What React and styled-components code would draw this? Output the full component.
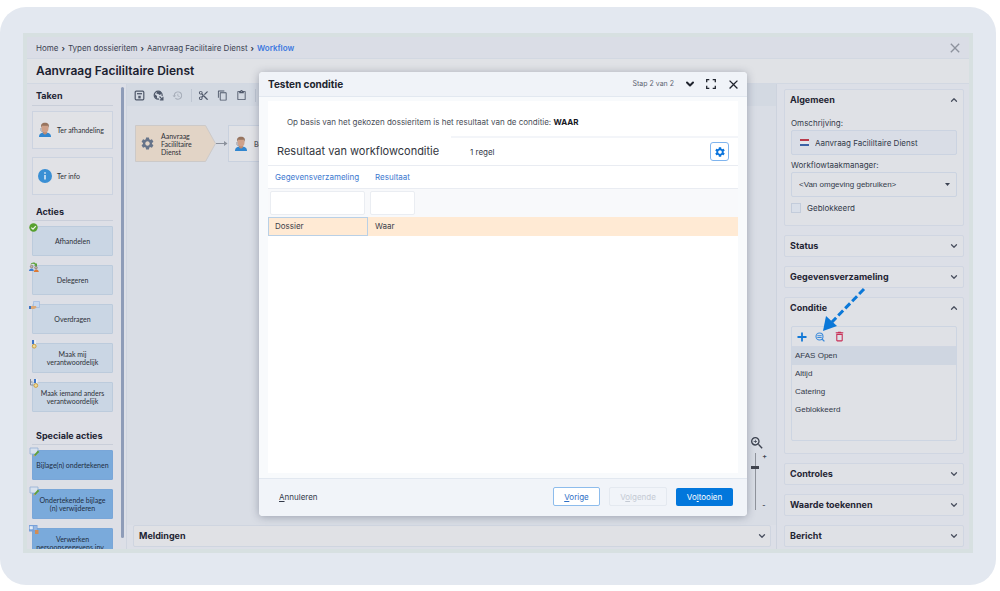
import React from "react";
import styled, { createGlobalStyle, css } from "styled-components";
import {
  MdClose,
  MdContentCopy,
  MdContentCut,
  MdContentPaste,
  MdDeleteOutline,
  MdHistory,
  MdOutlineZoomIn,
  MdSettings,
} from "react-icons/md";
import { FiChevronDown, FiChevronUp } from "react-icons/fi";

const GlobalStyle = createGlobalStyle`
  * {
    box-sizing: border-box;
  }
  body {
    margin: 0;
    background: #ffffff;
    font-family: Inter, sans-serif;
    font-size: 8px;
    line-height: 10px;
    color: #333a4a;
  }
  button, input, select {
    font: inherit;
    color: inherit;
    margin: 0;
    padding: 0;
  }
  button {
    background: none;
    border: 0;
    cursor: pointer;
  }
  svg {
    display: block;
    flex: none;
  }
`;

const Page = styled.div`
  display: flex;
  height: 100vh;
  padding: 7px 4px 6px 0;
`;

const Frame = styled.div`
  display: flex;
  flex: 1;
  padding: 26px 23px 32px;
  border-radius: 26px;
  background: #e3e8f0;
`;

const Window = styled.div`
  position: relative;
  display: flex;
  flex-direction: column;
  flex: 1;
  min-width: 0;
  border: 4px solid #d7e0e1;
  background: #dcdfe7;
`;

const Breadcrumb = styled.nav`
  display: flex;
  align-items: center;
  gap: 3px;
  height: 22px;
  flex: none;
  padding: 0 6px 0 9px;
  background: #dadde6;
  border-bottom: 1px solid #d2d8e2;
`;

const Crumb = styled.a`
  color: ${(props) => (props.$active ? "#3d79e0" : "#3c4353")};
  font-weight: ${(props) => (props.$active ? 600 : 400)};
  text-decoration: none;
`;

const Separator = styled.span`
  font-weight: 700;
`;

const CloseWindow = styled.button`
  margin-left: auto;
  color: #8d929d;
`;

const TitleBar = styled.header`
  display: flex;
  align-items: center;
  flex: none;
  height: 25px;
  padding: 0 9px;
  background: #e0e2e6;
  border-bottom: 1px solid #d2d8e2;
`;

const PageTitle = styled.h1`
  margin: 0;
  font-size: 12px;
  line-height: 14px;
  font-weight: 600;
  color: #1b2130;
`;

const Body = styled.div`
  display: flex;
  flex: 1;
  min-height: 0;
`;

const Sidebar = styled.aside`
  width: 94px;
  flex: none;
  overflow: hidden;
  padding: 0 8px 0 5px;
  background: #dddfe6;
`;

const ScrollThumb = styled.div`
  width: 3px;
  flex: none;
  margin: 3px 2px 11px 0;
  border-radius: 2px;
  background: #8e9cb8;
`;

const SectionTitle = styled.h2`
  display: flex;
  align-items: center;
  height: ${(props) => (props.$first ? 22 : 18)}px;
  margin: ${(props) => props.$gap || 0}px 0 5px;
  padding-top: ${(props) => (props.$first ? 3 : 0)}px;
  padding-left: 4px;
  border-bottom: 1px solid #c9ced9;
  font-size: 9px;
  line-height: 12px;
  font-weight: 700;
  color: #1f2534;
`;

const TaskCard = styled.button`
  display: flex;
  align-items: center;
  gap: 5px;
  width: 100%;
  height: 38px;
  margin-bottom: 8px;
  padding: 0 5px;
  border: 1px solid #ccd3e0;
  background: #e1e2e6;
  font-family: Lato, sans-serif;
  font-size: 7px;
  color: #2d3038;
  white-space: nowrap;
`;

const ActionCard = styled.button`
  position: relative;
  display: block;
  width: 100%;
  height: 30px;
  margin-bottom: 9px;
  border: 1px solid ${(props) => (props.$special ? "#79a6d8" : "#bccbdc")};
  border-radius: 1px;
  background: ${(props) => (props.$special ? "#7aaadb" : "#cad6e4")};
  font-family: Lato, sans-serif;
  font-size: 7px;
  line-height: 8px;
  color: ${(props) => (props.$special ? "#1d2d42" : "#2d3038")};
  white-space: pre-line;
`;

const Badge = styled.span`
  position: absolute;
  top: -4px;
  left: -4px;
`;

const Main = styled.main`
  display: flex;
  flex-direction: column;
  flex: 1;
  min-width: 0;
  border-left: 1px solid #cfd5e0;
  border-right: 1px solid #cdd3de;
`;

const Toolbar = styled.div`
  display: flex;
  align-items: center;
  height: 22px;
  flex: none;
  padding-left: 7px;
  background: #d3d9e2;
  color: #4f586a;
`;

const ToolButton = styled.button`
  display: flex;
  align-items: center;
  margin-right: 8px;
  opacity: ${(props) => (props.disabled ? 0.35 : 1)};
`;

const Divider = styled.span`
  width: 1px;
  height: 13px;
  margin-right: 6px;
  background: #bfc6d2;
`;

const Canvas = styled.div`
  position: relative;
  flex: 1;
  background: #d9dde5;
`;

const StartNode = styled.div`
  position: absolute;
  left: 8px;
  top: 19px;
  width: 81px;
  height: 37px;
`;

const StartShape = styled.svg`
  position: absolute;
  inset: 0;
`;

const NodeContent = styled.div`
  position: relative;
  display: flex;
  align-items: center;
  gap: 6px;
  height: 100%;
  padding-left: 5px;
  font-family: Lato, sans-serif;
  font-size: 7px;
  line-height: 8px;
  white-space: pre-line;
  color: #2d3038;
`;

const Connector = styled.svg`
  position: absolute;
  left: 89px;
  top: 33px;
`;

const TaskNode = styled.div`
  position: absolute;
  left: 101px;
  top: 19px;
  width: 81px;
  height: 37px;
  border: 1px solid #c9d1de;
  background: #e1e2e6;
`;

const ZoomControl = styled.div`
  position: absolute;
  right: 9px;
  bottom: 15px;
  width: 18px;
  color: #3d4350;
`;

const ZoomTrack = styled.div`
  display: flex;
  justify-content: space-between;
  height: 57px;
  margin-top: 2px;
  padding-left: 2px;
`;

const ZoomSlider = styled.input`
  appearance: none;
  writing-mode: vertical-lr;
  direction: rtl;
  width: 8px;
  height: 57px;
  background: linear-gradient(#8f939b, #8f939b) center / 1px 100% no-repeat;

  &::-webkit-slider-thumb {
    appearance: none;
    width: 8px;
    height: 3px;
    background: #41454f;
  }
`;

const ZoomSigns = styled.div`
  display: flex;
  flex-direction: column;
  justify-content: space-between;
  font-size: 7px;
  font-weight: 600;
  line-height: 8px;
`;

const Messages = styled.section`
  display: flex;
  align-items: center;
  justify-content: space-between;
  height: 22px;
  flex: none;
  margin: 0 5px 2px 6px;
  padding: 0 3px 0 5px;
  border: 1px solid #cfd5e0;
  border-radius: 2px;
  background: #e0e1e5;
`;

const PanelTitle = styled.h2`
  margin: 0;
  font-size: 9px;
  line-height: 12px;
  font-weight: 700;
  color: #1f2534;
`;

const PanelToggle = styled.button`
  color: #4a5060;
`;

const Properties = styled.aside`
  display: flex;
  flex-direction: column;
  gap: 9px;
  width: 192px;
  flex: none;
  padding: 5px 5px 0 7px;
  overflow: hidden;
`;

const Panel = styled.section`
  flex: none;
  border: 1px solid #d0d6e2;
  border-radius: 2px;
  background: #dfe1e6;
`;

const PanelHeader = styled.div`
  display: flex;
  align-items: center;
  justify-content: space-between;
  height: 20px;
  padding: 0 4px 0 5px;
`;

const PanelBody = styled.div`
  display: flex;
  flex-direction: column;
  padding: 8px 6px 12px;
`;

const FieldLabel = styled.label`
  margin: ${(props) => (props.$spaced ? "5px 0 2px" : "0 0 2px")};
`;

const fieldBox = css`
  height: 25px;
  border: 1px solid #cbd3e1;
  border-radius: 2px;
`;

const Description = styled.div`
  ${fieldBox}
  display: flex;
  align-items: center;
  gap: 6px;
  padding-left: 8px;
  background: #d9dde6;
`;

const DescriptionInput = styled.input`
  flex: 1;
  min-width: 0;
  border: 0;
  outline: 0;
  background: transparent;
`;

const SelectWrap = styled.div`
  position: relative;
`;

const Select = styled.select`
  ${fieldBox}
  appearance: none;
  width: 100%;
  padding: 0 7px;
  background: #dfe1e6;
  font-family: "Liberation Sans", sans-serif;
`;

const Caret = styled.svg`
  position: absolute;
  right: 7px;
  top: 11px;
  pointer-events: none;
`;

const CheckLabel = styled.label`
  display: flex;
  align-items: center;
  gap: 6px;
  margin-top: 6px;
`;

const Checkbox = styled.input`
  appearance: none;
  width: 10px;
  height: 10px;
  border: 1px solid #c3ccdb;
  background: #d9dfe9;
`;

const ListBox = styled.div`
  height: 115px;
  border: 1px solid #cdd5e2;
  border-radius: 2px;
`;

const ListTools = styled.div`
  display: flex;
  align-items: center;
  gap: 8px;
  height: 20px;
  padding-left: 5px;
  border-bottom: 1px solid #d0d6e2;
`;

const ListItem = styled.button`
  display: block;
  width: 100%;
  height: 18px;
  padding-left: 3px;
  background: ${(props) => (props.$selected ? "#cfd6e1" : "transparent")};
  font-family: "Liberation Sans", sans-serif;
  text-align: left;
`;

const Pointer = styled.svg`
  position: absolute;
  right: 99px;
  top: 250px;
`;

const Overlay = styled.div`
  position: absolute;
  inset: 0;
  display: flex;
  padding: 35px 222px 33px 232px;
  pointer-events: none;
`;

const Dialog = styled.div`
  display: flex;
  flex-direction: column;
  flex: 1;
  min-width: 0;
  border-radius: 4px;
  background: #f8fafc;
  box-shadow: 0 1px 8px rgba(40, 50, 75, 0.35);
  pointer-events: auto;
  overflow: hidden;
`;

const DialogHeader = styled.div`
  display: flex;
  align-items: center;
  height: 25px;
  flex: none;
  padding: 0 6px 0 9px;
  border-bottom: 1px solid #e2e8f0;
  background: #f0f3f8;
  color: #20242e;
`;

const DialogTitle = styled.h2`
  flex: 1;
  margin: 0;
  font-size: 10px;
  line-height: 12px;
  font-weight: 700;
`;

const Step = styled.span`
  font-size: 7px;
  color: #5d6370;
`;

const HeaderButton = styled.button`
  margin-left: 10px;
`;

const DialogBody = styled.div`
  display: flex;
  flex-direction: column;
  flex: 1;
  margin: 4px 9px 5px;
  background: #ffffff;
`;

const Message = styled.p`
  margin: 0;
  padding: 16px 19px 9px;
  color: #4a4e58;

  b {
    color: #15181f;
    font-weight: 700;
  }
`;

const ResultBar = styled.div`
  display: flex;
  height: 29px;
`;

const ResultTitle = styled.h3`
  width: 183px;
  margin: 0;
  padding-left: 9px;
  font-size: 11px;
  line-height: 30px;
  font-weight: 400;
  color: #33363e;
  white-space: nowrap;
`;

const ResultInfo = styled.div`
  display: flex;
  flex: 1;
  align-items: center;
  justify-content: space-between;
  padding: 0 9px 0 19px;
  border-top: 2px solid #f3f5f9;
`;

const SettingsButton = styled.button`
  display: flex;
  align-items: center;
  justify-content: center;
  width: 19px;
  height: 19px;
  border: 1px solid #7fb4ee;
  border-radius: 3px;
  color: #0a74dc;
`;

const Table = styled.table`
  width: 100%;
  border-collapse: collapse;
  table-layout: fixed;
  color: #3c404a;

  th,
  td {
    padding: 0 6px 0 7px;
    text-align: left;
    font-weight: 400;
  }
  th {
    height: 23px;
    border-top: 1px solid #e9ecf2;
    border-bottom: 1px solid #e9ecf2;
    color: #3c78cf;
  }
`;

const Column = styled.col`
  width: ${(props) => props.$width || "auto"};
`;

const FilterRow = styled.tr`
  background: #f8f9fb;

  td {
    height: 28px;
    padding: 0 3px 0 2px;
  }
`;

const FilterInput = styled.input`
  display: block;
  width: 100%;
  height: 24px;
  border: 1px solid #eaedf2;
  border-radius: 2px;
  background: #ffffff;
`;

const ResultRow = styled.tr`
  background: #ffead4;

  td {
    height: 19px;
  }
  td:first-child {
    outline: 1px solid #b9d0e6;
    outline-offset: -1px;
  }
`;

const DialogFooter = styled.div`
  display: flex;
  align-items: center;
  gap: 9px;
  height: 38px;
  flex: none;
  padding: 0 14px 2px 20px;
  border-top: 1px solid #e2e8f0;
  background: #f1f4f9;
`;

const CancelButton = styled.button`
  margin-right: auto;
`;

const FooterButton = styled.button`
  width: ${(props) => (props.$wide ? 58 : 47)}px;
  height: 19px;
  border: 1px solid #8dbcec;
  border-radius: 2px;
  background: #ffffff;
  color: #2f6fc6;

  &:disabled {
    border-color: #e4e9f0;
    background: transparent;
    color: #c4cad4;
  }
`;

const PrimaryButton = styled(FooterButton)`
  width: 57px;
  height: 18px;
  border: 0;
  background: #0277dc;
  color: #ffffff;
`;

const PersonIcon = () => (
  <svg width="14" height="16" viewBox="0 0 14 16">
    <path d="M1 15c0-3.400 2.400-4.500 6-4.500s6 1.100 6 4.500z" fill="#3186cf" />
    <path d="M5 9h4v2.500L7 12.800l-2-1.300z" fill="#bd8a70" />
    <ellipse cx="7" cy="6.200" rx="3.500" ry="4.300" fill="#cfa18a" />
    <path d="M3.200 6C2.400 2.500 4 .8 7 .8s4.600 1.700 3.800 5.200L10 3.800H4z" fill="#97745f" />
    <path d="M2.900 6v2.800l2.600 1.700" stroke="#7d8494" strokeWidth=".7" fill="none" />
  </svg>
);

const InfoIcon = () => (
  <svg width="14" height="14" viewBox="0 0 14 14">
    <circle cx="7" cy="7" r="7" fill="#3a8fd4" />
    <path d="M7 3.300v1.500M7 6v4.500" stroke="#e6eef6" strokeWidth="1.500" />
  </svg>
);

const SaveIcon = () => (
  <svg width="11" height="11" viewBox="0 0 11 11" fill="none" stroke="currentColor">
    <rect x="1.200" y="1.200" width="8.600" height="8.600" rx="1" strokeWidth="1.200" />
    <path d="M3 3.700h5" strokeWidth="1.300" />
    <path d="M5.500 5.800v2.600" strokeWidth="2.400" />
  </svg>
);

const GlobeIcon = () => (
  <svg width="11" height="11" viewBox="0 0 11 11">
    <circle cx="5.200" cy="5.200" r="4" fill="none" stroke="currentColor" strokeWidth="1.200" />
    <path d="M1.500 4 4 6v2.500L2 7zM4 1.500h3.500L8.500 4 6.500 5 5 3.800 3.500 4z" fill="currentColor" />
    <path d="M6 6h5v5H6z" fill="#d3d9e2" />
    <path d="m6.500 6.500 3.300 3.300M9.900 6.800v3.100H6.800" fill="none" stroke="currentColor" strokeWidth="1.200" />
  </svg>
);

const FlagIcon = () => (
  <svg width="9" height="7" viewBox="0 0 9 7">
    <path d="M0 0h9v2H0z" fill="#b93a4b" />
    <path d="M0 2h9v3H0z" fill="#e4e6ec" />
    <path d="M0 5h9v2H0z" fill="#3c62a6" />
  </svg>
);

const ExpandIcon = () => (
  <svg width="10" height="10" viewBox="0 0 10 10" fill="none" stroke="currentColor" strokeWidth="1.300">
    <path d="M.7 3.300V.7h2.600M6.700.7h2.600v2.600M9.300 6.700v2.600H6.700M3.300 9.300H.7V6.700" />
  </svg>
);

const PlusIcon = () => (
  <svg width="10" height="10" viewBox="0 0 10 10">
    <path d="M5 .5v9M.5 5h9" stroke="#1379d6" strokeWidth="1.800" />
  </svg>
);

const TestIcon = () => (
  <svg width="10" height="10" viewBox="0 0 10 10" fill="none" stroke="#3b8ada">
    <circle cx="4.500" cy="4.500" r="3.500" strokeWidth="1.100" />
    <path d="M2.300 3.700h4.400M2.300 5.500h4.400" strokeWidth="1" />
    <path d="m7 7 2.400 2.400" strokeWidth="1.300" />
  </svg>
);

const badgeIcons = {
  check: (
    <svg width="9" height="9" viewBox="0 0 9 9">
      <circle cx="4.500" cy="4.500" r="4.200" fill="#57a02f" />
      <path d="M2.300 4.600 4 6.200l2.800-3" fill="none" stroke="#f0f5ee" strokeWidth="1.200" />
    </svg>
  ),
  people: (
    <svg width="10" height="10" viewBox="0 0 10 10">
      <path d="M1.500 2.800C2 .5 5.500-.3 7 1.800l1-.6v3.300L5 3.300l1-.6C5 1.500 3 1.500 1.500 2.800z" fill="#5ba23b" />
      <circle cx="2.600" cy="4.600" r="1.300" fill="#c9b8ac" stroke="#66584e" strokeWidth=".5" />
      <circle cx="7" cy="5.700" r="1.300" fill="#c9b8ac" stroke="#66584e" strokeWidth=".5" />
      <path d="M0 9c0-3.400 4.800-3.400 4.800 0z" fill="#3f7fd0" />
      <path d="M4.800 10c0-3.400 5-3.400 5 0z" fill="#dc7a35" />
    </svg>
  ),
  hand: (
    <svg width="11" height="9" viewBox="0 0 11 9">
      <path d="M4.500.500h6v6h-6z" fill="#c6d7ee" stroke="#9db9df" strokeWidth=".7" />
      <path d="M2 5h5l.5 1.800L5 8H2z" fill="#dba877" />
      <path d="M0 5h2v3H0z" fill="#3c75c0" />
    </svg>
  ),
  medal: (
    <svg width="10" height="9" viewBox="0 0 10 9">
      <path d="M3 0h2.200v4H3z" fill="#3e75c8" />
      <path d="M5.200 0H7v4H5.200z" fill="#edf0f5" />
      <circle cx="5.200" cy="6.200" r="1.900" fill="#eedb9a" stroke="#c79a3c" strokeWidth=".9" />
    </svg>
  ),
  medalOther: (
    <svg width="10" height="9" viewBox="0 0 10 9">
      <path d="M1.500 0v6h3M1.500 3h2" fill="none" stroke="#858c99" />
      <path d="M5 0h2v4H5z" fill="#3e75c8" />
      <path d="M7 0h1.500v4H7z" fill="#edf0f5" />
      <circle cx="6.800" cy="6.500" r="1.900" fill="#eedb9a" stroke="#c79a3c" strokeWidth=".9" />
    </svg>
  ),
  sign: (
    <svg width="11" height="10" viewBox="0 0 11 10">
      <path d="M1 1h8v6H1z" fill="#d8e2ef" stroke="#94aed4" strokeWidth=".8" />
      <path d="m5 8 3.800-4.400 1.500 1.300-4 4.100z" fill="#5da03c" />
      <path d="m4.400 9.400.6-1.700 1.500 1.200z" fill="#d7a13d" />
    </svg>
  ),
  card: (
    <svg width="10" height="9" viewBox="0 0 10 9">
      <path d="M0 0h8.500v6.500H0z" fill="#78a1da" />
      <path d="M1 1.500h2.500v2.500H1zM4.800 2h3M4.800 4h3" fill="#e4ecf6" stroke="#e4ecf6" strokeWidth=".6" />
      <path d="M6 5h3.500v4H6z" fill="#d18d55" />
    </svg>
  ),
};

const actions = [
  { label: "Afhandelen", icon: "check" },
  { label: "Delegeren", icon: "people" },
  { label: "Overdragen", icon: "hand" },
  { label: "Maak mij\nverantwoordelijk", icon: "medal" },
  { label: "Maak iemand anders\nverantwoordelijk", icon: "medalOther" },
];

const specialActions = [
  { label: "Bijlage(n) ondertekenen", icon: "sign" },
  { label: "Ondertekende bijlage\n(n) verwijderen", icon: "sign" },
  { label: "Verwerken\npersoonsgegevens inv...", icon: "card" },
];

const conditions = ["AFAS Open", "Altijd", "Catering", "Geblokkeerd"];

const Section = ({ title, children }) => (
  <Panel>
    <PanelHeader>
      <PanelTitle>{title}</PanelTitle>
      <PanelToggle aria-label={title}>
        {children ? (
          <FiChevronUp size={10} strokeWidth={3} />
        ) : (
          <FiChevronDown size={10} strokeWidth={3} />
        )}
      </PanelToggle>
    </PanelHeader>
    {children}
  </Panel>
);

const ActionList = ({ items, special }) =>
  items.map((item) => (
    <ActionCard key={item.label} $special={special}>
      <Badge>{badgeIcons[item.icon]}</Badge>
      {item.label}
    </ActionCard>
  ));

const TestDialog = () => (
  <Overlay>
    <Dialog role="dialog" aria-labelledby="dialog-title">
      <DialogHeader>
        <DialogTitle id="dialog-title">Testen conditie</DialogTitle>
        <Step>Stap 2 van 2</Step>
        <HeaderButton aria-label="Stappen">
          <FiChevronDown size={12} strokeWidth={4} />
        </HeaderButton>
        <HeaderButton aria-label="Volledig scherm">
          <ExpandIcon />
        </HeaderButton>
        <HeaderButton aria-label="Sluiten">
          <MdClose size={15} />
        </HeaderButton>
      </DialogHeader>
      <DialogBody>
        <Message>
          Op basis van het gekozen dossieritem is het resultaat van de conditie: <b>WAAR</b>
        </Message>
        <ResultBar>
          <ResultTitle>Resultaat van workflowconditie</ResultTitle>
          <ResultInfo>
            <span>1 regel</span>
            <SettingsButton aria-label="Instellingen">
              <MdSettings size={12} />
            </SettingsButton>
          </ResultInfo>
        </ResultBar>
        <Table>
          <colgroup>
            <Column $width="100px" />
            <Column $width="50px" />
            <Column />
          </colgroup>
          <thead>
            <tr>
              <th>Gegevensverzameling</th>
              <th>Resultaat</th>
              <th />
            </tr>
          </thead>
          <tbody>
            <FilterRow>
              <td>
                <FilterInput aria-label="Filter gegevensverzameling" />
              </td>
              <td>
                <FilterInput aria-label="Filter resultaat" />
              </td>
              <td />
            </FilterRow>
            <ResultRow>
              <td>Dossier</td>
              <td>Waar</td>
              <td />
            </ResultRow>
          </tbody>
        </Table>
      </DialogBody>
      <DialogFooter>
        <CancelButton>
          <u>A</u>nnuleren
        </CancelButton>
        <FooterButton>
          <u>V</u>orige
        </FooterButton>
        <FooterButton $wide disabled>
          V<u>o</u>lgende
        </FooterButton>
        <PrimaryButton>
          Vo<u>l</u>tooien
        </PrimaryButton>
      </DialogFooter>
    </Dialog>
  </Overlay>
);

const App = () => (
  <>
    <GlobalStyle />
    <Page>
      <Frame>
        <Window>
          <Breadcrumb>
            <Crumb href="#home">Home</Crumb>
            <Separator>›</Separator>
            <Crumb href="#typen">Typen dossieritem</Crumb>
            <Separator>›</Separator>
            <Crumb href="#aanvraag">Aanvraag Facilitaire Dienst</Crumb>
            <Separator>›</Separator>
            <Crumb href="#workflow" $active>
              Workflow
            </Crumb>
            <CloseWindow aria-label="Venster sluiten">
              <MdClose size={16} />
            </CloseWindow>
          </Breadcrumb>
          <TitleBar>
            <PageTitle>Aanvraag Facililtaire Dienst</PageTitle>
          </TitleBar>
          <Body>
            <Sidebar>
              <SectionTitle $first>Taken</SectionTitle>
              <TaskCard>
                <PersonIcon />
                Ter afhandeling
              </TaskCard>
              <TaskCard>
                <InfoIcon />
                Ter info
              </TaskCard>
              <SectionTitle $gap={8}>Acties</SectionTitle>
              <ActionList items={actions} />
              <SectionTitle $gap={15}>Speciale acties</SectionTitle>
              <ActionList items={specialActions} special />
            </Sidebar>
            <ScrollThumb />
            <Main>
              <Toolbar>
                <ToolButton aria-label="Opslaan">
                  <SaveIcon />
                </ToolButton>
                <ToolButton aria-label="Publiceren">
                  <GlobeIcon />
                </ToolButton>
                <ToolButton aria-label="Geschiedenis" disabled>
                  <MdHistory size={11} />
                </ToolButton>
                <Divider />
                <ToolButton aria-label="Knippen">
                  <MdContentCut size={11} />
                </ToolButton>
                <ToolButton aria-label="Kopiëren">
                  <MdContentCopy size={11} />
                </ToolButton>
                <ToolButton aria-label="Plakken">
                  <MdContentPaste size={11} />
                </ToolButton>
                <Divider />
              </Toolbar>
              <Canvas>
                <StartNode>
                  <StartShape width="81" height="37" viewBox="0 0 81 37">
                    <path d="M.5.500h70l10 18-10 18H.5z" fill="#e2d4c6" stroke="#ccc9c8" />
                  </StartShape>
                  <NodeContent>
                    <MdSettings size={15} color="#66748a" />
                    {"Aanvraag\nFacililtaire\nDienst"}
                  </NodeContent>
                </StartNode>
                <Connector width="12" height="9" viewBox="0 0 12 9">
                  <path d="M0 4.500h11" stroke="#8b919c" />
                  <path d="M8 2l3.500 2.500L8 7z" fill="#8b919c" />
                </Connector>
                <TaskNode>
                  <NodeContent>
                    <PersonIcon />
                    Be
                  </NodeContent>
                </TaskNode>
                <ZoomControl>
                  <MdOutlineZoomIn size={16} />
                  <ZoomTrack>
                    <ZoomSlider type="range" aria-label="Zoom" defaultValue={76} />
                    <ZoomSigns>
                      <span>+</span>
                      <span>-</span>
                    </ZoomSigns>
                  </ZoomTrack>
                </ZoomControl>
              </Canvas>
              <Messages>
                <PanelTitle>Meldingen</PanelTitle>
                <PanelToggle aria-label="Meldingen">
                  <FiChevronDown size={10} strokeWidth={3} />
                </PanelToggle>
              </Messages>
            </Main>
            <Properties>
              <Section title="Algemeen">
                <PanelBody>
                  <FieldLabel htmlFor="description">Omschrijving:</FieldLabel>
                  <Description>
                    <FlagIcon />
                    <DescriptionInput id="description" defaultValue="Aanvraag Facililtaire Dienst" />
                  </Description>
                  <FieldLabel htmlFor="manager" $spaced>
                    Workflowtaakmanager:
                  </FieldLabel>
                  <SelectWrap>
                    <Select id="manager">
                      <option>&lt;Van omgeving gebruiken&gt;</option>
                    </Select>
                    <Caret width="5" height="3" viewBox="0 0 5 3">
                      <path d="M0 0h5L2.500 3z" fill="#3c4353" />
                    </Caret>
                  </SelectWrap>
                  <CheckLabel>
                    <Checkbox type="checkbox" />
                    Geblokkeerd
                  </CheckLabel>
                </PanelBody>
              </Section>
              <Section title="Status" />
              <Section title="Gegevensverzameling" />
              <Section title="Conditie">
                <PanelBody>
                  <ListBox>
                    <ListTools>
                      <button aria-label="Toevoegen">
                        <PlusIcon />
                      </button>
                      <button aria-label="Testen">
                        <TestIcon />
                      </button>
                      <button aria-label="Verwijderen">
                        <MdDeleteOutline size={13} color="#c92f57" />
                      </button>
                    </ListTools>
                    {conditions.map((condition, index) => (
                      <ListItem key={condition} $selected={index === 0}>
                        {condition}
                      </ListItem>
                    ))}
                  </ListBox>
                </PanelBody>
              </Section>
              <Section title="Controles" />
              <Section title="Waarde toekennen" />
              <Section title="Bericht" />
            </Properties>
          </Body>
          <Pointer width="50" height="46" viewBox="0 0 50 46" aria-hidden="true">
            <path d="M44 2 12 35" stroke="#0b78d8" strokeWidth="3" strokeDasharray="7 3" />
            <path d="m3 44 3-15 11 10z" fill="#0b78d8" />
          </Pointer>
          <TestDialog />
        </Window>
      </Frame>
    </Page>
  </>
);

export default App;
